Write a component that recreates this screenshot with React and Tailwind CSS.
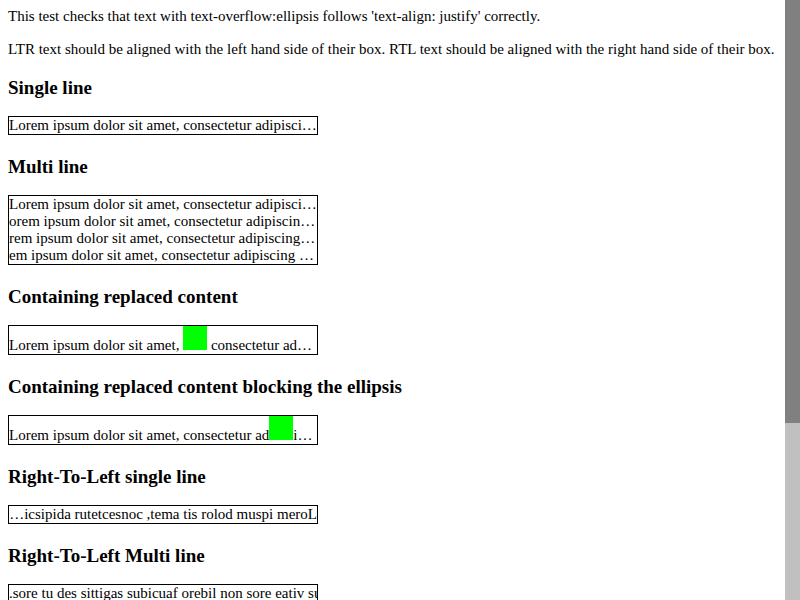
// App.jsx
const LOREM = "Lorem ipsum dolor sit amet, consectetur adipiscing elit."

function Heading({ children, first = false }) {
    return (
        <h3 className={`${first ? "mt-[19px]" : "mt-[21px]"} mb-[17px] text-[19px] leading-[22px] font-bold`}>
            {children}
        </h3>
    )
}

function Box({ children }) {
    return <div className="w-[310px] border border-black leading-[17px]">{children}</div>
}

function Swatch() {
    return <span className="inline-block size-[24px] bg-[#00ff00] align-baseline" />
}

export default function App() {
    return (
        <div className="flex h-[600px] overflow-hidden bg-white text-black font-['Liberation_Serif',serif] text-[15px] leading-[17px]">
            <main className="flex-1 overflow-hidden px-2 pt-2">
                <p>This test checks that text with text-overflow:ellipsis follows 'text-align: justify' correctly.</p>
                <p className="mt-4">
                    LTR text should be aligned with the left hand side of their box. RTL text should be aligned with the right hand side of their box.
                </p>

                <Heading first>Single line</Heading>
                <Box>
                    <div className="truncate">{LOREM}</div>
                </Box>

                <Heading>Multi line</Heading>
                <Box>
                    <div className="truncate">{LOREM}</div>
                    <div className="truncate">{LOREM.slice(1)}</div>
                    <div className="truncate">{LOREM.slice(2)}</div>
                    <div className="truncate">{LOREM.slice(3)}</div>
                </Box>

                <Heading>Containing replaced content</Heading>
                <Box>
                    <div className="whitespace-nowrap overflow-hidden">
                        Lorem ipsum dolor sit amet, <Swatch /> consectetur ad…
                    </div>
                </Box>

                <Heading>Containing replaced content blocking the ellipsis</Heading>
                <Box>
                    <div className="whitespace-nowrap overflow-hidden">
                        Lorem ipsum dolor sit amet, consectetur ad<Swatch />i…
                    </div>
                </Box>

                <Heading>Right-To-Left single line</Heading>
                <Box>
                    <div dir="rtl" className="truncate [unicode-bidi:bidi-override]">{LOREM}</div>
                </Box>

                <Heading>Right-To-Left Multi line</Heading>
                <Box>
                    <div className="whitespace-nowrap overflow-hidden">
                        <span dir="rtl" className="[unicode-bidi:bidi-override]">
                            us vitae eros non libero faucibus sagittis sed ut eros.
                        </span>
                    </div>
                    <div dir="rtl" className="truncate [unicode-bidi:bidi-override]">{LOREM}</div>
                    <div dir="rtl" className="truncate [unicode-bidi:bidi-override]">{LOREM.slice(1)}</div>
                    <div dir="rtl" className="truncate [unicode-bidi:bidi-override]">{LOREM.slice(2)}</div>
                </Box>
            </main>

            {/* scrollbar */}
            <aside className="flex w-[15px] flex-col">
                <div className="h-[423px] bg-[#808080]" />
                <div className="flex-1 bg-[#c0c0c0]" />
            </aside>
        </div>
    )
}
